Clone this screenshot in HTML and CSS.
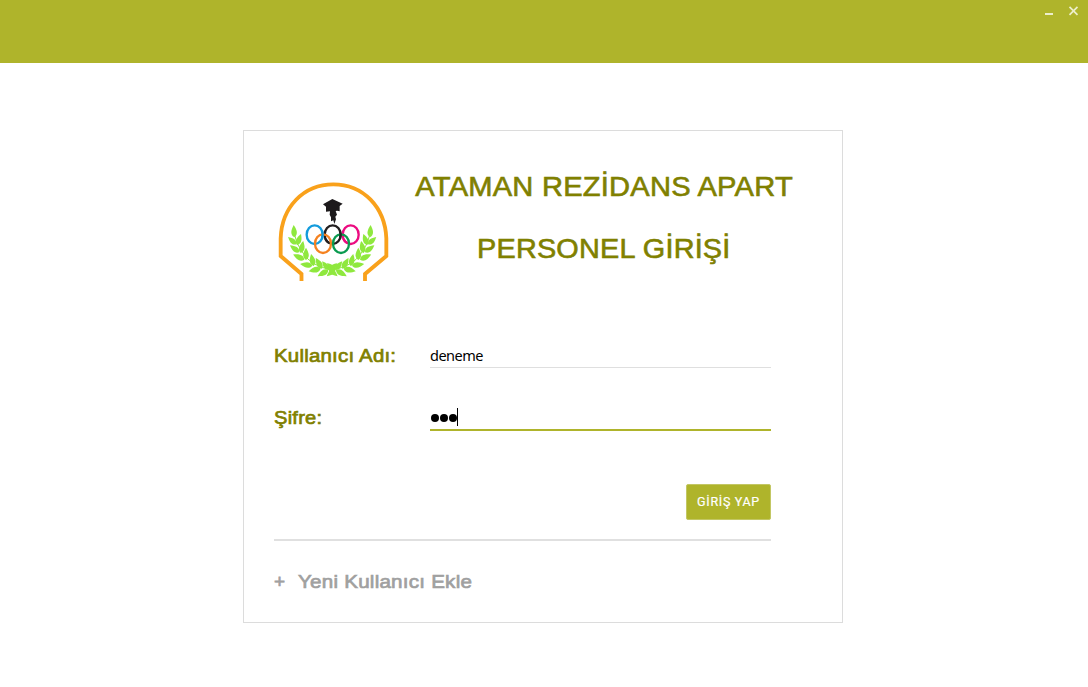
FILE: index.html
```html
<!DOCTYPE html>
<html lang="tr">
<head>
<meta charset="utf-8">
<title>Personel Girişi</title>
<link rel="stylesheet" href="styles.css">
</head>
<body>
<header class="titlebar">
  <svg class="window-buttons" width="36" height="12" viewBox="0 0 36 12">
    <path d="M1 8h8" stroke-width="2"/>
    <path d="M25.500 .8l8 8M33.500 .8l-8 8" stroke-width="1.700"/>
  </svg>
</header>
<main class="card">
  <section class="brand">
    <svg class="logo" viewBox="0 0 378 342">
      <defs>
        <path id="leaf" d="M0 0C-13 -9 -9 -22 0 -37C9 -22 13 -9 0 0Z"/>
        <g id="branch">
          <path d="M73 180Q78 210 99 237Q125 278 186 287" fill="none" stroke="#8fe83e" stroke-width="3"/>
          <use href="#leaf" transform="translate(73 190) rotate(-3)"/>
          <use href="#leaf" transform="translate(79 211) rotate(-48) scale(.9)"/>
          <use href="#leaf" transform="translate(81 213) rotate(20) scale(.95)"/>
          <use href="#leaf" transform="translate(88 235) rotate(-53) scale(.95)"/>
          <use href="#leaf" transform="translate(92 237) rotate(12)"/>
          <use href="#leaf" transform="translate(103 257) rotate(-65)"/>
          <use href="#leaf" transform="translate(108 258) rotate(0)"/>
          <use href="#leaf" transform="translate(127 275) rotate(-82)"/>
          <use href="#leaf" transform="translate(131 276) rotate(-12)"/>
          <use href="#leaf" transform="translate(152 284) rotate(-102)"/>
          <use href="#leaf" transform="translate(156 284) rotate(-30)"/>
          <use href="#leaf" transform="translate(175 288) rotate(-120)"/>
          <use href="#leaf" transform="translate(177 288) rotate(-38) scale(.9)"/>
          <use href="#leaf" transform="translate(196 285) rotate(-130) scale(.9)"/>
          <use href="#leaf" transform="translate(196 289) rotate(-50) scale(.9)"/>
        </g>
      </defs>
      <path d="M94.500 321V300L32 246V193C35 100 100 31 190 31S345 100 349 193V246L285 300V321" fill="none" stroke="#f9a11b" stroke-width="11.500"/>
      <g fill="#8fe83e">
        <use href="#branch"/>
        <use href="#branch" transform="translate(373 0) scale(-1 1)"/>
      </g>
      <g fill="none" stroke-width="7">
        <ellipse cx="134" cy="182" rx="24" ry="28" stroke="#139bdc"/>
        <ellipse cx="188" cy="182" rx="24" ry="28" stroke="#231f20"/>
        <ellipse cx="242" cy="182" rx="24" ry="28" stroke="#ec0b80"/>
        <ellipse cx="159" cy="209" rx="24" ry="28" stroke="#f58220"/>
        <ellipse cx="213" cy="209" rx="24" ry="28" stroke="#0b9b50"/>
        <path d="M157.500 176Q159 184 156 193" stroke="#139bdc"/>
        <path d="M211.500 176Q213 184 210 193" stroke="#231f20"/>
        <path d="M166 195Q170 203 177 207" stroke="#231f20"/>
        <path d="M220 195Q224 203 231 207" stroke="#ec0b80"/>
      </g>
      <path d="M187 75L218 89L209 96V112Q202 109 197 111L201 122L196 128L198 136L193 150L190 139L183 142V130L179 122L180 112L168 113V98L159 91Z" fill="#1d1a1c"/>
    </svg>
    <h1 class="headline"><span class="company">ATAMAN REZİDANS APART</span><span class="purpose">PERSONEL GİRİŞİ</span></h1>
  </section>
  <form class="login">
    <div class="row">
      <span class="label user-label">Kullanıcı Adı:</span>
      <div class="field">deneme</div>
    </div>
    <div class="row">
      <span class="label pass-label">Şifre:</span>
      <div class="field active"><i class="dot"></i><i class="dot"></i><i class="dot"></i><i class="caret"></i></div>
    </div>
    <button class="submit" type="button">GİRİŞ YAP</button>
  </form>
  <footer class="signup"><span class="plus">+</span><span class="signup-text">Yeni Kullanıcı Ekle</span></footer>
</main>
</body>
</html>
```

FILE: styles.css
```css
* { box-sizing: border-box; }
body {
  margin: 0;
  height: 687px;
  background: #fff;
  font-family: "Liberation Sans", Arial, sans-serif;
  overflow: hidden;
}
.titlebar {
  height: 63px;
  padding: 6px 8px 0 0;
  background: #afb42b;
  display: flex;
  justify-content: flex-end;
}
.window-buttons { stroke: #eceecb; fill: none; }
.card {
  width: 600px;
  height: 493px;
  margin: 67px 0 0 243px;
  padding: 0 0 0 30px;
  border: 1px solid #dcdcdc;
}
.brand { display: flex; height: 206px; }
.logo { width: 126px; height: 114px; margin: 43px 0 0 -4px; flex: none; }
.headline {
  margin: 37px 0 0 19px;
  width: 378px;
  font-size: 27px;
  font-weight: 400;
  line-height: 38px;
  color: #808000;
  -webkit-text-stroke: .6px #808000;
  display: flex;
  flex-direction: column;
  align-items: center;
  gap: 24px;
  white-space: nowrap;
}
.company { letter-spacing: .2px; transform: scaleX(1.078); }
.purpose { letter-spacing: .2px; transform: scaleX(1.067); }
.login { width: 497px; height: 204px; border-bottom: 2px solid #e0e0e0; display: flex; flex-direction: column; }
.row { display: flex; height: 62px; }
.label {
  width: 156px;
  padding-top: 7px;
  font-size: 19px;
  line-height: 24px;
  color: #808000;
  -webkit-text-stroke: .7px #808000;
  white-space: nowrap;
  transform-origin: left;
}
.user-label { letter-spacing: .2px; transform: scaleX(1.075); }
.pass-label { letter-spacing: .2px; transform: scaleX(1.06); }
.field {
  width: 341px;
  height: 31px;
  padding-top: 8px;
  border-bottom: 1px solid #dfdfdf;
  font: 14.500px/20px "Noto Sans", sans-serif;
  letter-spacing: -.5px;
  color: #000;
}
.field.active {
  height: 32px;
  padding: 9px 0 0 1px;
  border-bottom: 2px solid #afb42b;
  display: flex;
  align-items: flex-start;
}
.dot { width: 8px; height: 8px; margin: 6px 1px 0 0; border-radius: 50%; background: #000; }
.caret { width: 1px; height: 18px; margin-left: -1px; background: #000; }
.submit {
  align-self: flex-end;
  width: 85px;
  height: 36px;
  margin-top: 23px;
  padding: 0 0 1px;
  border: 1px solid #c3c764;
  border-radius: 2px;
  background: #afb42b;
  color: #fff;
  font: 400 12.500px/33px Roboto, sans-serif;
  letter-spacing: .7px;
  -webkit-text-stroke: .2px #fff;
  white-space: nowrap;
}
.signup {
  display: flex;
  padding-top: 29px;
  font-size: 19px;
  line-height: 24px;
  color: #a0a0a0;
  -webkit-text-stroke: .7px #a0a0a0;
}
.plus { width: 24px; }
.signup-text { letter-spacing: .2px; transform: scaleX(1.085); transform-origin: left; }
```
